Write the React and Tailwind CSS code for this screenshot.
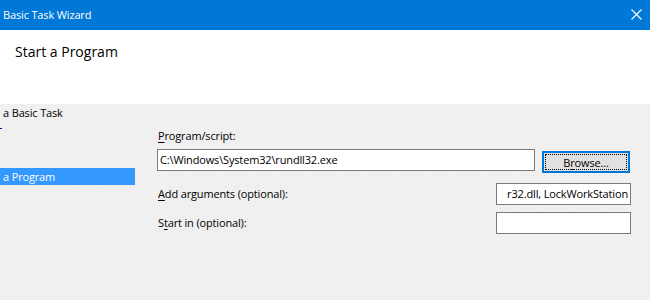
import React from 'react';

function Underlined({ before = '', key1, after = '' }) {
  return (
    <span>
      {before}
      <span className="underline underline-offset-2">{key1}</span>
      {after}
    </span>
  );
}

export default function App() {
  return (
    <div className="w-[650px] h-[300px] overflow-hidden bg-[#f0f0f0] font-['Segoe_UI','Open_Sans',sans-serif] text-[11px] tracking-[-0.15px] text-black">
      {/* title bar */}
      <div className="h-[30px] bg-[#0078d7] flex items-center justify-between pl-[3px] pr-[8px] text-white text-[11px]">
        <span>Basic Task Wizard</span>
        <svg width="11" height="11" viewBox="0 0 11 11" className="-mt-[1px]">
          <path d="M0.5 0.5 L10.5 10.5 M10.5 0.5 L0.5 10.5" stroke="white" strokeWidth="1.1" />
        </svg>
      </div>

      {/* header */}
      <div className="h-[74px] bg-white pl-[15px] pt-[12px] text-[14px] leading-[20px] tracking-normal">Start a Program</div>

      {/* body */}
      <div className="flex h-[196px] bg-[radial-gradient(#dcdcdc_0.5px,transparent_0.8px)] bg-size-[11px_11px]">
        <div className="w-[135px] shrink-0 flex flex-col">
          <div className="h-[18px] pl-[3px] leading-[18px]">a Basic Task</div>
          <div className="mt-[6px] w-[2px] h-[1px] bg-[#00007f]" />
          <div className="mt-[39px] h-[17px] bg-[#3399ff] text-white pl-[3px] leading-[17px]">a Program</div>
        </div>

        <div className="flex flex-col pl-[22px] pt-[24px]">
          <div className="h-[16px] leading-[16px] pl-[1px]">
            <Underlined key1="P" after="rogram/script:" />
          </div>

          <div className="mt-[5px] flex items-start gap-[7px]">
            <div className="w-[378px] h-[22px] border border-[#7a7a7a] bg-white pl-[2px] leading-[20px] whitespace-nowrap overflow-hidden">
              C:\Windows\System32\rundll32.exe
            </div>
            <div className="mt-[2px] w-[88px] h-[22px] border-2 border-[#0078d7] bg-[#e1e1e1] p-[1px]">
              <div className="h-full border border-dotted border-black flex items-center justify-center leading-none">
                <Underlined before="B" key1="r" after="owse..." />
              </div>
            </div>
          </div>

          <div className="mt-[10px] flex items-center justify-between w-[474px]">
            <div className="pl-[1px]">
              <Underlined key1="A" after="dd arguments (optional):" />
            </div>
            <div className="w-[135px] h-[22px] border border-[#7a7a7a] bg-white pr-[2px] leading-[20px] whitespace-nowrap overflow-hidden flex justify-end">
              <span className="shrink-0">r32.dll, LockWorkStation</span>
            </div>
          </div>

          <div className="mt-[7px] flex items-center justify-between w-[474px]">
            <div className="pl-[1px]">
              <Underlined before="S" key1="t" after="art in (optional):" />
            </div>
            <div className="w-[135px] h-[22px] border border-[#7a7a7a] bg-white" />
          </div>
        </div>
      </div>
    </div>
  );
}
